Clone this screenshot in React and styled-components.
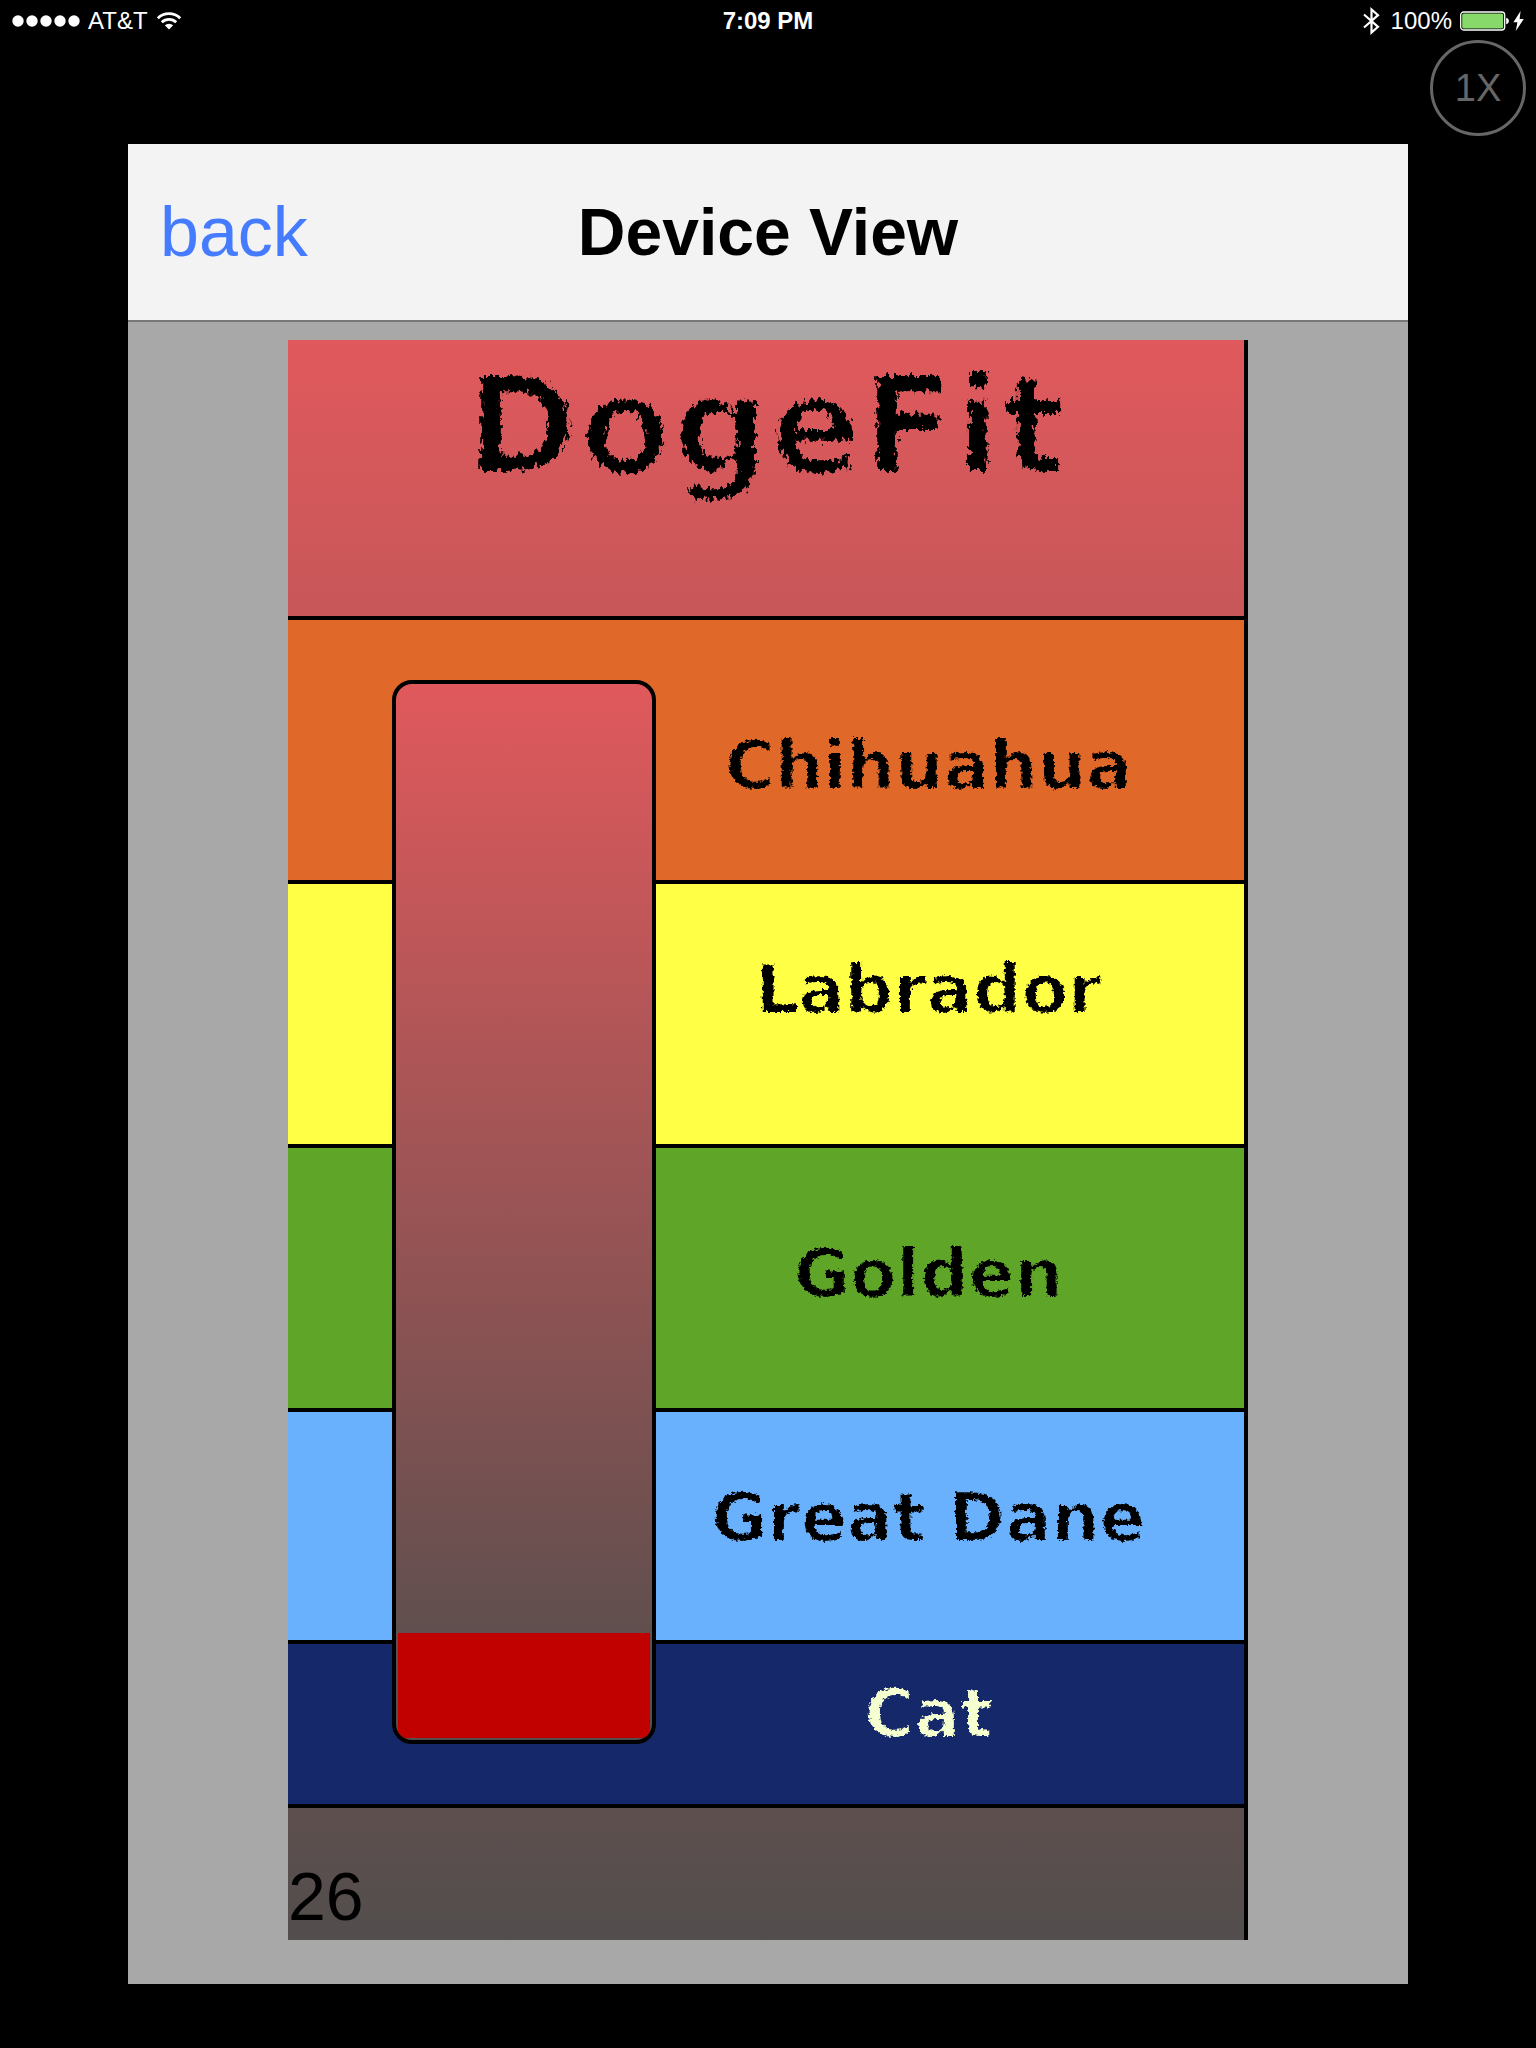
import React from "react";
import styled, { createGlobalStyle } from "styled-components";

const GlobalStyle = createGlobalStyle`
  *, *::before, *::after { box-sizing: border-box; }
  body {
    margin: 0;
    background: #000;
    font-family: "Helvetica Neue", "Liberation Sans", Arial, sans-serif;
  }
  h1, h2, p, ul { margin: 0; padding: 0; }
`;

const Screen = styled.div`
  display: flex;
  flex-direction: column;
  min-height: 100vh;
  padding-bottom: 64px;
  background: #000;
`;

const StatusBar = styled.header`
  display: grid;
  grid-template-columns: 1fr auto 1fr;
  align-items: center;
  height: 40px;
  padding: 2px 12px 0;
  color: #fff;
  font-size: 24px;
  line-height: 38px;
`;

const StatusGroup = styled.div`
  display: flex;
  align-items: center;
  justify-content: ${(p) => (p.$end ? "flex-end" : "flex-start")};
  gap: 8px;
`;

const Power = styled.div`
  display: flex;
  align-items: center;
  gap: 3px;
`;

const Clock = styled.span`
  font-weight: 700;
`;

const ZoomRow = styled.div`
  display: flex;
  justify-content: flex-end;
  height: 104px;
  padding: 0 10px;
`;

const ZoomButton = styled.button`
  width: 96px;
  height: 96px;
  padding: 0;
  border: 3px solid #666;
  border-radius: 50%;
  background: transparent;
  color: #666;
  font-family: inherit;
  font-size: 38px;
`;

const Phone = styled.main`
  margin: 0 128px;
  background: #a8a8a8;
`;

const NavBar = styled.nav`
  display: grid;
  grid-template-columns: 1fr auto 1fr;
  align-items: center;
  height: 178px;
  padding: 0 32px;
  border-bottom: 2px solid #777;
  background: #f3f3f3;
`;

const BackButton = styled.button`
  justify-self: start;
  padding: 0;
  border: 0;
  background: none;
  color: #457cff;
  font-family: inherit;
  font-size: 70px;
  line-height: 80px;
`;

const NavTitle = styled.h1`
  font-size: 66px;
  font-weight: 700;
  line-height: 80px;
  white-space: nowrap;
`;

const Stage = styled.div`
  padding: 18px 0 44px;
`;

const Board = styled.section`
  display: grid;
  grid-template-columns: minmax(0, 104fr) minmax(0, 264fr) minmax(0, 588fr);
  grid-template-rows: 280px repeat(3, 264px) 232px 164px 132px;
  width: 75%;
  margin: 0 auto;
  border-right: 4px solid #000;
  background: linear-gradient(#e0595c, #524e4d);
`;

const BoardTitle = styled.h2`
  grid-column: 1 / -1;
  grid-row: 1;
  padding-top: 10px;
  border-bottom: 4px solid #000;
  font-family: Chalkduster, "DejaVu Sans", sans-serif;
  font-size: 136px;
  font-weight: 700;
  line-height: 152px;
  text-align: center;
`;

const Band = styled.div`
  grid-column: 1 / -1;
  grid-row: ${(p) => p.$row};
  padding: ${(p) => p.$top}px 0 0 34%;
  border-bottom: 4px solid #000;
  background: ${(p) => p.$fill};
  color: ${(p) => p.$ink || "#000"};
  font-family: Chalkduster, "DejaVu Sans", sans-serif;
  font-size: 68px;
  font-weight: 700;
  line-height: 88px;
  text-align: center;
  white-space: nowrap;
`;

const Chalk = styled.span`
  display: inline-block;
  filter: url(#${(p) => (p.$large ? "chalk-large" : "chalk")});
`;

const Tube = styled.div`
  grid-column: 2;
  grid-row: 2 / 7;
  display: flex;
  flex-direction: column;
  justify-content: flex-end;
  margin: 60px 0 64px;
  padding: 2px;
  overflow: hidden;
  border: 4px solid #000;
  border-radius: 20px;
  background: linear-gradient(#e0595c, #524e4d);
`;

const TubeFill = styled.div`
  background: #c10000;
`;

const Footer = styled.div`
  grid-column: 1 / -1;
  grid-row: 7;
  display: flex;
  align-items: flex-end;
  padding-bottom: 10px;
  font-size: 68px;
  line-height: 68px;
`;

const FilterDefs = styled.svg`
  position: absolute;
`;

const bands = [
  { name: "Chihuahua", fill: "#e06829", top: 102 },
  { name: "Labrador", fill: "#ffff45", top: 62 },
  { name: "Golden", fill: "#5fa628", top: 82 },
  { name: "Great Dane", fill: "#69b0fd", top: 62 },
  { name: "Cat", fill: "#14286a", top: 26, ink: "#f5ffd0" },
];

function SignalDots() {
  return (
    <svg width="68" height="12" viewBox="0 0 68 12" fill="#fff" aria-hidden="true">
      {[6, 20, 34, 48, 62].map((x) => (
        <circle key={x} cx={x} cy="6" r="5.7" />
      ))}
    </svg>
  );
}

function WifiIcon() {
  return (
    <svg width="26" height="18" viewBox="0 0 26 18" aria-hidden="true">
      <g fill="none" stroke="#fff" strokeWidth="2.8">
        <path d="M1.8 6.2a16 16 0 0 1 22.4 0" />
        <path d="M5.8 10.3a10.3 10.3 0 0 1 14.4 0" />
      </g>
      <path d="M8.8 13.3a6.2 6.2 0 0 1 8.4 0L13 17.6z" fill="#fff" />
    </svg>
  );
}

function BluetoothIcon() {
  return (
    <svg width="20" height="28" viewBox="0 0 20 28" aria-hidden="true">
      <path d="M1 7.5 15 19.8 8.5 25.5V2.5L15 8.2 1 20.5" fill="none" stroke="#fff" strokeWidth="2.2" />
    </svg>
  );
}

function BatteryIcon() {
  return (
    <svg width="50" height="20" viewBox="0 0 50 20" aria-hidden="true">
      <rect x="0.7" y="1" width="44" height="18" rx="3" fill="none" stroke="#fff" strokeWidth="1.3" />
      <rect x="2.2" y="2.5" width="41" height="15" rx="1.6" fill="#87d96a" />
      <path d="M46.2 6.8c3.6.8 3.6 5.6 0 6.4z" fill="#fff" />
    </svg>
  );
}

function BoltIcon() {
  return (
    <svg width="11" height="20" viewBox="0 0 11 20" aria-hidden="true">
      <path d="M7.6 0 0.4 11.2h4L2.8 20l8-12h-4.2z" fill="#fff" />
    </svg>
  );
}

function ChalkFilters() {
  return (
    <FilterDefs width="0" height="0" aria-hidden="true">
      <filter id="chalk">
        <feMorphology in="SourceGraphic" operator="erode" radius="1" result="thin" />
        <feTurbulence type="fractalNoise" baseFrequency="0.3" numOctaves="2" seed="4" result="noise" />
        <feDisplacementMap in="thin" in2="noise" scale="6" xChannelSelector="R" yChannelSelector="G" />
      </filter>
      <filter id="chalk-large">
        <feMorphology in="SourceGraphic" operator="erode" radius="3 2" result="thin" />
        <feTurbulence type="fractalNoise" baseFrequency="0.25 0.12" numOctaves="3" seed="7" result="noise" />
        <feDisplacementMap in="thin" in2="noise" scale="14" xChannelSelector="R" yChannelSelector="G" />
      </filter>
    </FilterDefs>
  );
}

export default function App() {
  const level = 10;
  return (
    <Screen>
      <GlobalStyle />
      <ChalkFilters />
      <StatusBar>
        <StatusGroup>
          <SignalDots />
          <span>AT&amp;T</span>
          <WifiIcon />
        </StatusGroup>
        <Clock>7:09 PM</Clock>
        <StatusGroup $end>
          <BluetoothIcon />
          <span>100%</span>
          <Power>
            <BatteryIcon />
            <BoltIcon />
          </Power>
        </StatusGroup>
      </StatusBar>
      <ZoomRow>
        <ZoomButton type="button">1X</ZoomButton>
      </ZoomRow>
      <Phone>
        <NavBar>
          <BackButton type="button">back</BackButton>
          <NavTitle>Device View</NavTitle>
        </NavBar>
        <Stage>
          <Board>
            <BoardTitle>
              <Chalk $large>DogeFit</Chalk>
            </BoardTitle>
            {bands.map((b, i) => (
              <Band key={b.name} $row={i + 2} $top={b.top} $fill={b.fill} $ink={b.ink}>
                <Chalk>{b.name}</Chalk>
              </Band>
            ))}
            <Tube role="meter" aria-valuenow={level} aria-valuemin={0} aria-valuemax={100} aria-label="Level">
              <TubeFill style={{ height: `${level}%` }} />
            </Tube>
            <Footer>26</Footer>
          </Board>
        </Stage>
      </Phone>
    </Screen>
  );
}
